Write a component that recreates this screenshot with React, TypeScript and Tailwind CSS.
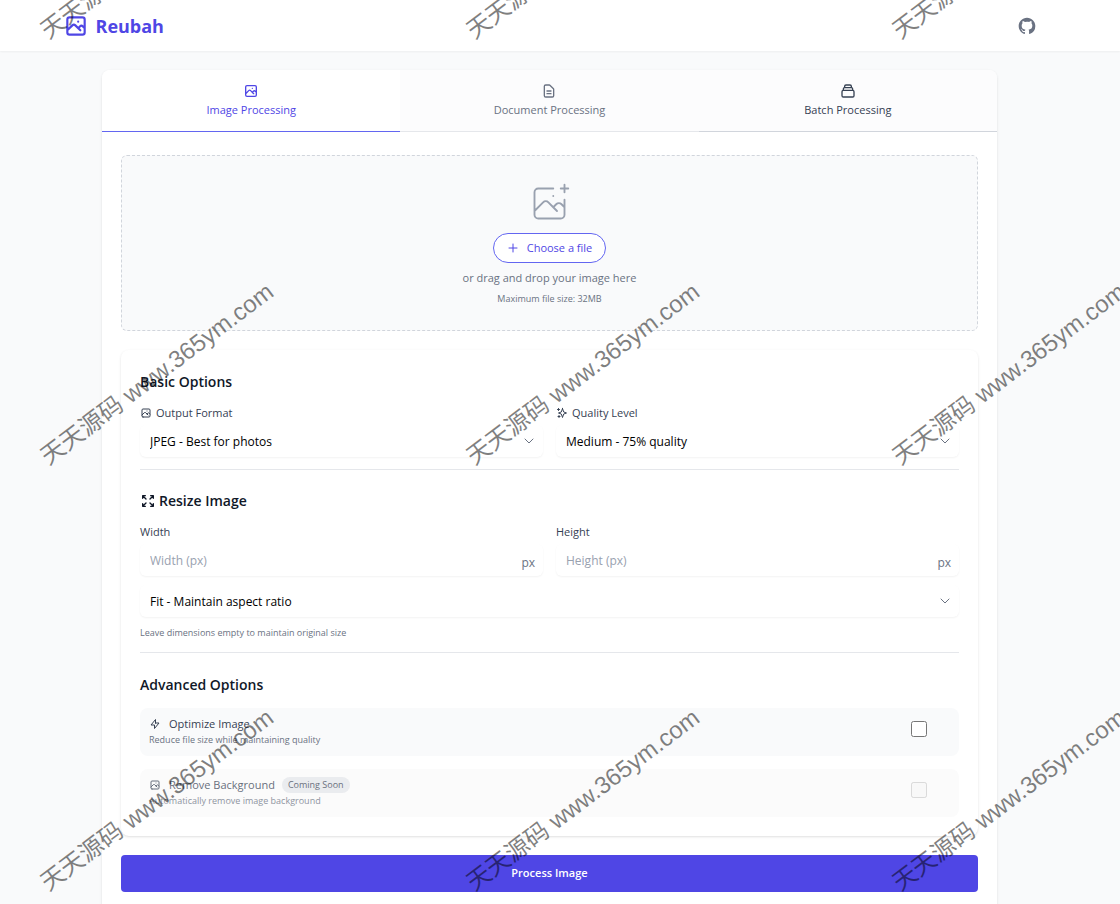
import React, { useState } from "react";

// ---- Icons ------------------------------------------------------------------
const ICONS = {
  image:
    "M4 16l4.586-4.586a2 2 0 012.828 0L16 16m-2-2l1.586-1.586a2 2 0 012.828 0L20 14m-6-6h.01M6 20h12a2 2 0 002-2V6a2 2 0 00-2-2H6a2 2 0 00-2 2v12a2 2 0 002 2z",
  document:
    "M9 12h6m-6 4h6m2 5H7a2 2 0 01-2-2V5a2 2 0 012-2h5.586a1 1 0 01.707.293l5.414 5.414a1 1 0 01.293.707V19a2 2 0 01-2 2z",
  batch:
    "M19 11H5m14 0a2 2 0 012 2v6a2 2 0 01-2 2H5a2 2 0 01-2-2v-6a2 2 0 012-2m14 0V9a2 2 0 00-2-2M5 11V9a2 2 0 012-2m0 0V5a2 2 0 012-2h6a2 2 0 012 2v2M7 7h10",
  sparkles:
    "M5 3v4M3 5h4M6 17v4m-2-2h4m5-16l2.286 6.857L21 12l-5.714 2.143L13 21l-2.286-6.857L5 12l5.714-2.143L13 3z",
  expand:
    "M4 8V4m0 0h4M4 4l5 5m11-1V4m0 0h-4m4 0l-5 5M4 16v4m0 0h4m-4 0l5-5m11 5l-5-5m5 5v-4m0 4h-4",
  bolt: "M13 10V3L4 14h7v7l9-11h-7z",
  plus: "M12 4v16m8-8H4",
  chevron: "M4 8l8 8 8-8",
};

function Icon({ name, className }: { name: keyof typeof ICONS; className: string }) {
  return (
    <svg
      className={`shrink-0 ${className}`}
      viewBox="0 0 24 24"
      fill="none"
      stroke="currentColor"
      strokeWidth={2}
      strokeLinecap="round"
      strokeLinejoin="round"
      aria-hidden="true"
    >
      <path d={ICONS[name]} />
    </svg>
  );
}

function UploadIcon() {
  return (
    <svg
      className="size-[45px] text-gray-400"
      viewBox="0 0 48 48"
      fill="none"
      stroke="currentColor"
      strokeWidth={2}
      strokeLinecap="round"
      strokeLinejoin="round"
      aria-hidden="true"
    >
      <path d="M28 8H12a4 4 0 00-4 4v20m32-12v8m0 0v8a4 4 0 01-4 4H12a4 4 0 01-4-4v-4m32-4l-3.172-3.172a4 4 0 00-5.656 0L28 28M8 32l9.172-9.172a4 4 0 015.656 0L28 28m0 0l4 4m4-24h8m-4-4v8m-12 4h.02" />
    </svg>
  );
}

function GithubIcon() {
  return (
    <svg className="size-5" viewBox="0 0 24 24" fill="currentColor" aria-hidden="true">
      <path
        fillRule="evenodd"
        clipRule="evenodd"
        d="M12 2C6.477 2 2 6.484 2 12.017c0 4.425 2.865 8.18 6.839 9.504.5.092.682-.217.682-.483 0-.237-.008-.868-.013-1.703-2.782.605-3.369-1.343-3.369-1.343-.454-1.158-1.11-1.466-1.11-1.466-.908-.62.069-.608.069-.608 1.003.07 1.531 1.032 1.531 1.032.892 1.53 2.341 1.088 2.91.832.092-.647.35-1.088.636-1.338-2.22-.253-4.555-1.113-4.555-4.951 0-1.093.39-1.988 1.029-2.688-.103-.253-.446-1.272.098-2.65 0 0 .84-.27 2.75 1.026A9.564 9.564 0 0112 6.844c.85.004 1.705.115 2.504.337 1.909-1.296 2.747-1.027 2.747-1.027.546 1.379.202 2.398.1 2.651.64.7 1.028 1.595 1.028 2.688 0 3.848-2.339 4.695-4.566 4.943.359.309.678.92.678 1.855 0 1.338-.012 2.419-.012 2.747 0 .268.18.58.688.482A10.019 10.019 0 0022 12.017C22 6.484 17.522 2 12 2z"
      />
    </svg>
  );
}

// ---- Form pieces ------------------------------------------------------------
function Select({ id, label, options }: { id: string; label?: string; options: string[] }) {
  return (
    <div className="relative">
      <select
        id={id}
        aria-label={label}
        className="h-8 w-full appearance-none rounded-md bg-white pl-2.5 pr-8 pt-0.5 text-xs text-black shadow-xs"
      >
        {options.map((o) => (
          <option key={o}>{o}</option>
        ))}
      </select>
      <Icon
        name="chevron"
        className="pointer-events-none absolute right-2 top-2.5 size-3 text-gray-500"
      />
    </div>
  );
}

function SizeField({ id, label }: { id: string; label: string }) {
  return (
    <div>
      <label htmlFor={id} className="block text-[11px] leading-4 font-medium text-gray-700">
        {label}
      </label>
      <div className="relative mt-1">
        <input
          id={id}
          type="number"
          placeholder={`${label} (px)`}
          className="h-8 w-full rounded-md bg-white pl-2.5 pr-10 text-xs shadow-xs outline-none placeholder:text-gray-400"
        />
        <span className="pointer-events-none absolute inset-y-0 right-2 flex items-center pt-1.5 text-xs text-gray-500">
          px
        </span>
      </div>
    </div>
  );
}

// ---- Watermark --------------------------------------------------------------
const MARK_STEP = 426;

function Watermark() {
  const marks = [0, 1, 2].flatMap((row) => [0, 1, 2].map((col) => ({ row, col })));
  return (
    <div className="pointer-events-none absolute inset-0 z-10 overflow-hidden" aria-hidden="true">
      {marks.map(({ row, col }) => (
        <span
          key={`${row}-${col}`}
          className="absolute -translate-x-1/2 -translate-y-1/2 -rotate-37 whitespace-nowrap font-['Liberation_Sans','Noto_Sans_CJK_SC',sans-serif] text-2xl text-black/50"
          style={{ left: 157 + col * MARK_STEP, top: -52 + row * MARK_STEP }}
        >
          天天源码 www.365ym.com
        </span>
      ))}
    </div>
  );
}

const TABS = [
  { id: "image", label: "Image Processing", icon: "image", idle: "border-gray-200 text-gray-500" },
  { id: "document", label: "Document Processing", icon: "document", idle: "border-gray-200 text-gray-500" },
  { id: "batch", label: "Batch Processing", icon: "batch", idle: "border-gray-300 text-gray-700" },
] as const;

export default function App() {
  const [tab, setTab] = useState<string>("image");
  const [optimize, setOptimize] = useState(false);

  return (
    <div className="relative min-h-screen overflow-hidden bg-gray-50 font-['Open_Sans','Noto_Sans',sans-serif]">
      <header className="bg-white pr-[21px] shadow-xs">
        <div className="mx-auto flex h-[51px] max-w-[974px] items-center justify-between">
          <a href="#" className="flex items-center gap-[7px] text-[#4f46e5]">
            <Icon name="image" className="size-[26px]" />
            <span className="text-lg font-bold">Reubah</span>
          </a>
          <a href="#" aria-label="GitHub" className="text-gray-500">
            <GithubIcon />
          </a>
        </div>
      </header>

      <main className="pr-[21px] pt-[19px]">
        <div className="mx-auto max-w-[895px] overflow-hidden rounded-lg bg-white shadow-sm">
          {/* Tabs */}
          <div className="grid grid-cols-3" role="tablist">
            {TABS.map((t) => (
              <button
                key={t.id}
                role="tab"
                aria-selected={tab === t.id}
                onClick={() => setTab(t.id)}
                className={`flex h-[62px] flex-col items-center justify-center gap-[3px] border-b text-[11px] leading-4 font-medium ${
                  tab === t.id ? "border-[#6366f1] bg-white text-[#4f46e5]" : `bg-[#fcfcfd] ${t.idle}`
                }`}
              >
                <Icon name={t.icon} className="size-4" />
                {t.label}
              </button>
            ))}
          </div>

          <form className="px-[19px] pb-5 pt-[23px]" onSubmit={(e) => e.preventDefault()}>
            {/* Drop zone */}
            <div className="flex flex-col items-center rounded-md border border-dashed border-gray-300 bg-gray-50 pb-[23px] pt-[25px]">
              <UploadIcon />
              <button
                type="button"
                className="mt-[7px] flex h-[30px] items-center gap-2 rounded-full border border-[#6366f1] bg-white px-[13px] text-[11px] font-medium text-[#4f46e5]"
              >
                <Icon name="plus" className="size-3" />
                Choose a file
              </button>
              <p className="mt-[7px] text-[11px] leading-4 text-gray-500">
                or drag and drop your image here
              </p>
              <p className="mt-[5px] text-[9px] leading-4 text-gray-500">Maximum file size: 32MB</p>
            </div>

            <div className="mt-[19px] rounded-lg bg-white p-[19px] shadow-sm">
              {/* Basic options */}
              <section className="border-b border-gray-200 pb-3">
                <h2 className="pt-[3px] text-sm leading-5 font-semibold text-gray-900">Basic Options</h2>
                <div className="mt-[13px] grid grid-cols-2 gap-[13px]">
                  <div>
                    <label
                      htmlFor="format"
                      className="mb-1 flex items-center gap-1 text-[11px] leading-4 font-medium text-gray-700"
                    >
                      <Icon name="image" className="size-3" />
                      Output Format
                    </label>
                    <Select id="format" options={["JPEG - Best for photos", "PNG", "WebP"]} />
                  </div>
                  <div>
                    <label
                      htmlFor="quality"
                      className="mb-1 flex items-center gap-1 text-[11px] leading-4 font-medium text-gray-700"
                    >
                      <Icon name="sparkles" className="size-3" />
                      Quality Level
                    </label>
                    <Select id="quality" options={["Medium - 75% quality", "High", "Low"]} />
                  </div>
                </div>
              </section>

              {/* Resize */}
              <section className="border-b border-gray-200 pb-[11px] pt-[21px]">
                <h2 className="flex items-center gap-[3px] text-sm leading-5 font-semibold text-gray-900">
                  <Icon name="expand" className="size-4" />
                  Resize Image
                </h2>
                <div className="mt-[13px] grid grid-cols-2 gap-[13px]">
                  <SizeField id="width" label="Width" />
                  <SizeField id="height" label="Height" />
                </div>
                <div className="mt-[9px]">
                  <Select id="fit" label="Resize mode" options={["Fit - Maintain aspect ratio", "Fill", "Stretch"]} />
                </div>
                <p className="mt-2 text-[9px] leading-4 text-gray-500">
                  Leave dimensions empty to maintain original size
                </p>
              </section>

              {/* Advanced options */}
              <section className="pt-[22px]">
                <h2 className="text-sm leading-5 font-semibold text-gray-900">Advanced Options</h2>
                <div className="mt-[13px] flex items-start justify-between rounded-lg bg-gray-50 py-2 pl-[9px] pr-8">
                  <div>
                    <label
                      htmlFor="optimize"
                      className="flex items-center gap-2 text-[11px] leading-4 font-medium text-gray-700"
                    >
                      <Icon name="bolt" className="size-3" />
                      Optimize Image
                    </label>
                    <p className="text-[9px] leading-4 text-gray-500">
                      Reduce file size while maintaining quality
                    </p>
                  </div>
                  <input
                    id="optimize"
                    type="checkbox"
                    checked={optimize}
                    onChange={(e) => setOptimize(e.target.checked)}
                    className="mt-[5px] size-4"
                  />
                </div>
                <div className="mt-[13px] flex items-start justify-between rounded-lg bg-[#fbfbfb] py-2 pl-[9px] pr-8">
                  <div className="opacity-75">
                    <div className="flex items-center gap-[7px]">
                      <label
                        htmlFor="remove-bg"
                        className="flex items-center gap-2 text-[11px] leading-4 font-medium text-gray-700"
                      >
                        <Icon name="image" className="size-3" />
                        Remove Background
                      </label>
                      <span className="rounded-full bg-gray-200 px-1.5 text-[9px] leading-4 font-medium text-gray-700">
                        Coming Soon
                      </span>
                    </div>
                    <p className="text-[9px] leading-4 text-gray-500">
                      Automatically remove image background
                    </p>
                  </div>
                  <input id="remove-bg" type="checkbox" disabled className="mt-[5px] size-4 opacity-75" />
                </div>
              </section>
            </div>

            <button
              type="submit"
              className="mt-[19px] h-[37px] w-full rounded bg-[#4f46e5] text-[11px] font-semibold text-white"
            >
              Process Image
            </button>
          </form>
        </div>
      </main>

      <Watermark />
    </div>
  );
}
